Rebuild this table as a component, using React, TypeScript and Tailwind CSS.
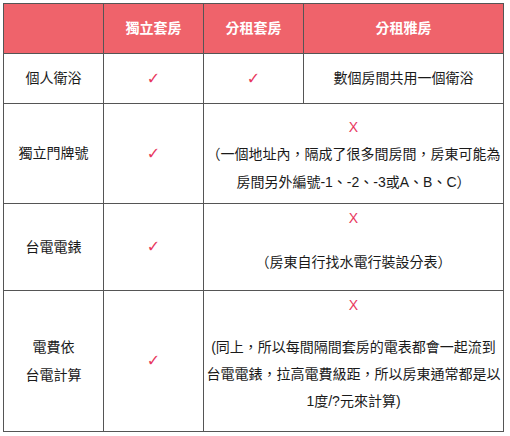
import React from "react";

const font = { fontFamily: '"Liberation Sans", "Noto Sans CJK TC", sans-serif' };

function Check() {
  return <span className="text-[16px] text-[#e8385e]" style={{ fontFamily: '"DejaVu Sans", sans-serif' }}>✓</span>;
}

function Cross() {
  return <div className="text-[14px] leading-[26px] text-[#e8385e]">X</div>;
}

const cell = "border-r border-b border-[#555] flex items-center justify-center text-center";

export default function App() {
  return (
    <div className="min-h-screen bg-white p-[3px] text-[14px] text-[#1a1a1a]" style={font}>
      <div className="grid w-[501px] grid-cols-[100px_100px_100px_200px] grid-rows-[50px_50px_100px_87px_141px] border-l border-t border-[#555]">
        {/* header */}
        <div className={`${cell} bg-[#ef636b]`} />
        <div className={`${cell} bg-[#ef636b] font-bold text-white`}>獨立套房</div>
        <div className={`${cell} bg-[#ef636b] font-bold text-white`}>分租套房</div>
        <div className={`${cell} bg-[#ef636b] font-bold text-white`}>分租雅房</div>

        {/* 個人衛浴 */}
        <div className={cell}>個人衛浴</div>
        <div className={cell}><Check /></div>
        <div className={cell}><Check /></div>
        <div className={cell}>數個房間共用一個衛浴</div>

        {/* 獨立門牌號 */}
        <div className={cell}>獨立門牌號</div>
        <div className={cell}><Check /></div>
        <div className={`${cell} col-span-2 flex-col !justify-start pt-[10px]`}>
          <Cross />
          <div className="whitespace-nowrap leading-[28px]">
            （一個地址內，隔成了很多間房間，房東可能為<br />
            房間另外編號-1、-2、-3或A、B、C）
          </div>
        </div>

        {/* 台電電錶 */}
        <div className={cell}>台電電錶</div>
        <div className={cell}><Check /></div>
        <div className={`${cell} col-span-2 flex-col !justify-start pt-[1px]`}>
          <Cross />
          <div className="mt-[17px] whitespace-nowrap leading-[28px]">（房東自行找水電行裝設分表）</div>
        </div>

        {/* 電費依台電計算 */}
        <div className={`${cell} leading-[28px]`}>電費依<br />台電計算</div>
        <div className={cell}><Check /></div>
        <div className={`${cell} col-span-2 flex-col !justify-start pt-[1px]`}>
          <Cross />
          <div className="mt-[16px] whitespace-nowrap leading-[27px]">
            (同上，所以每間隔間套房的電表都會一起流到<br />
            台電電錶，拉高電費級距，所以房東通常都是以<br />
            1度/?元來計算)
          </div>
        </div>
      </div>
    </div>
  );
}
